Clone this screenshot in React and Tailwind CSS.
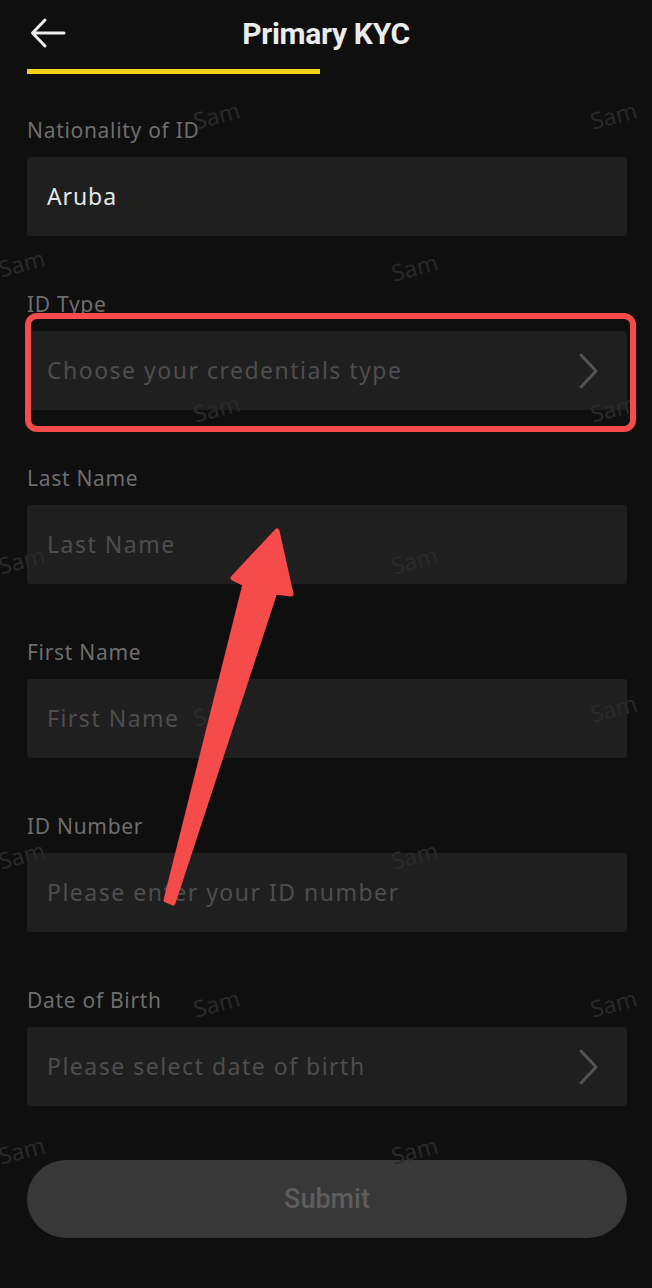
const fields = [
  { label: "Nationality of ID", value: "Aruba" },
  { label: "ID Type", placeholder: "Choose your credentials type", chevron: true },
  { label: "Last Name", placeholder: "Last Name" },
  { label: "First Name", placeholder: "First Name" },
  { label: "ID Number", placeholder: "Please enter your ID number" },
  { label: "Date of Birth", placeholder: "Please select date of birth", chevron: true },
];

// watermark spots, as they sit on the screenshot
const marks = [
  [193, 98], [590, 98], [-2, 246], [391, 250],
  [193, 391], [590, 391], [-2, 543], [391, 543],
  [193, 695], [590, 691], [-2, 838], [391, 838],
  [193, 986], [590, 986], [-2, 1133], [391, 1133],
];

const Chevron = () => (
  <svg width="24" height="40" viewBox="0 0 24 40" fill="none">
    <path d="M4 4 L19 20 L4 36" stroke="#545454" strokeWidth="3" strokeLinecap="round" strokeLinejoin="round" />
  </svg>
);

const Field = ({ field }) => {
  return (
    <div className="flex flex-col">
      <p className="h-[28px] leading-[28px] text-[21px] tracking-[0.7px] text-[#6e6e6e] font-['Noto_Sans',sans-serif]">
        {field.label}
      </p>
      <div className="mt-[13px] h-[79px] rounded-[3px] bg-[#1f1f1f] flex items-center justify-between pl-[20px] pr-[26px]">
        {field.value ? (
          <span className="text-[23px] tracking-[0.9px] text-[#e6e6e6] font-['Noto_Sans',sans-serif]">{field.value}</span>
        ) : (
          <span className="text-[23px] tracking-[1.5px] text-[#4e4e4e] font-['Noto_Sans',sans-serif]">
            {field.placeholder}
          </span>
        )}
        {field.chevron && <Chevron />}
      </div>
    </div>
  );
};

const App = () => {
  return (
    <div className="relative w-[652px] h-[1288px] overflow-hidden bg-[#0f0f0f]">
      {/* header */}
      <div className="relative h-[66px] flex items-center justify-center">
        <svg className="absolute left-[28px] top-[16px]" width="40" height="34" viewBox="0 0 40 34" fill="none">
          <path d="M36 17 H5 M17 4 L4.5 17 L17 30" stroke="#ececec" strokeWidth="3" strokeLinecap="round" strokeLinejoin="round" />
        </svg>
        <h1 className="text-[30px] font-bold text-[#ececec] font-['Roboto',sans-serif] tracking-[-0.3px]">
          Primary KYC
        </h1>
      </div>
      <div className="ml-[27px] mt-[3px] w-[293px] h-[5px] bg-[#f2d21c]" />

      <div className="pl-[27px] pr-[25px] mt-[42px] flex flex-col gap-[54px]">
        {fields.map((field) => (
          <Field key={field.label} field={field} />
        ))}
      </div>

      <div className="pl-[27px] pr-[25px] mt-[54px]">
        <button className="w-full h-[78px] rounded-full bg-[#383838] text-[27px] font-medium text-[#5d5d5d] font-['Roboto',sans-serif]">
          Submit
        </button>
      </div>

      {/* watermarks */}
      {marks.map(([x, y], i) => (
        <span
          key={i}
          className="absolute text-[23px] text-[#2a2a2a] font-['Noto_Sans',sans-serif] -rotate-[15deg] pointer-events-none"
          style={{ left: x, top: y }}
        >
          Sam
        </span>
      ))}

      {/* annotation: highlight box */}
      <div className="absolute left-[25px] top-[313px] w-[611px] h-[119px] rounded-[12px] border-[6px] border-[#f54b4b]" />

      {/* annotation: arrow */}
      <svg className="absolute left-0 top-0 pointer-events-none" width="652" height="1288" viewBox="0 0 652 1288">
        <polygon
          points="277,531 291,594 275,592 173,903 166,900 245,584 233,578"
          fill="#f54b4b"
          stroke="#f54b4b"
          strokeWidth="5"
          strokeLinejoin="round"
        />
      </svg>
    </div>
  );
};

export default App;
